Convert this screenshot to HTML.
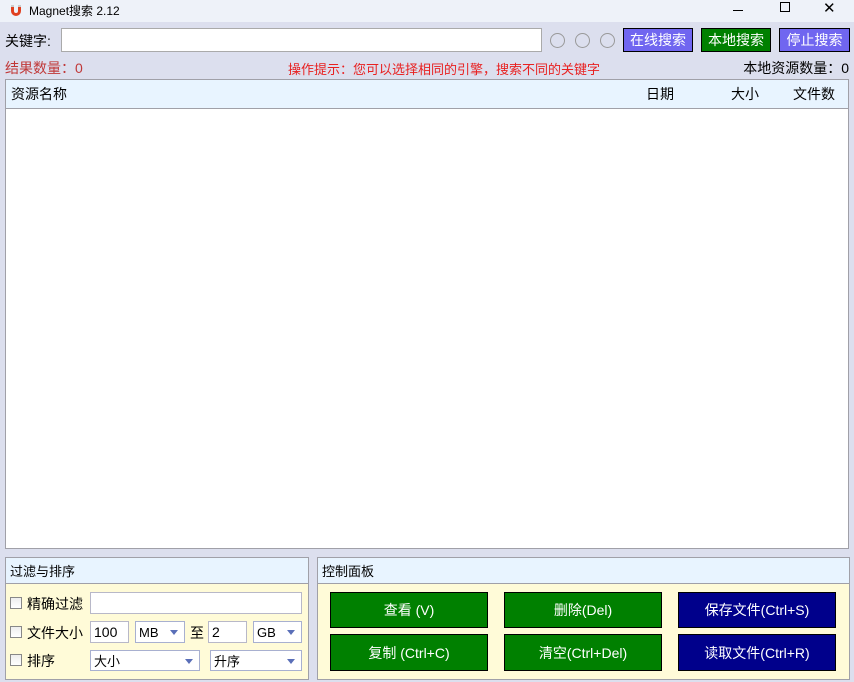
<!DOCTYPE html>
<html><head><meta charset="utf-8"><style>
*{box-sizing:border-box;margin:0;padding:0}
body{width:854px;height:682px;background:#dcdfee;font-family:"Liberation Sans","Noto Sans CJK SC",sans-serif;font-size:14px;position:relative;overflow:hidden;color:#000}
.a{position:absolute}
.btn{position:absolute;border:1px solid #000;color:#fff;display:flex;align-items:center;justify-content:center;font-size:14px}
.cb{position:absolute;width:12px;height:12px;border:1px solid #888;background:linear-gradient(#eee,#fff)}
.inp{position:absolute;background:#fff;border:1px solid #b8b8c8;font-size:14px;padding-left:3px;display:flex;align-items:center}
.sel{position:absolute;background:#fff;border:1px solid #a8b0d0;font-size:13px;padding-left:3px;display:flex;align-items:center}
.sel:after{content:"";position:absolute;right:6px;top:50%;margin-top:-2px;border-left:4px solid transparent;border-right:4px solid transparent;border-top:5px solid #5a6fb8}
.circ{position:absolute;width:15px;height:15px;border:1px solid #999;border-radius:50%}
</style></head><body>
<div class="a" style="left:0;top:0;width:854px;height:22px;background:#eef2f9"></div>
<svg class="a" style="left:8px;top:2px" width="16" height="16" viewBox="0 0 16 16"><path d="M3 4v5a5 5 0 0 0 10 0V4h-3v5a2 2 0 0 1-4 0V4z" fill="#e04020"/><rect x="3" y="3" width="3" height="2" fill="#ccc"/><rect x="10" y="3" width="3" height="2" fill="#ccc"/></svg>
<div class="a" style="left:29px;top:2px;font-size:12px">Magnet搜索 2.12</div>
<div class="a" style="left:733px;top:10px;width:10px;height:1px;background:#000"></div>
<div class="a" style="left:780px;top:2px;width:10px;height:10px;border:1px solid #000"></div>
<div class="a" style="left:823px;top:-1px;font-size:15px">✕</div>

<div class="a" style="left:5px;top:31px">关键字:</div>
<div class="inp" style="left:61px;top:28px;width:481px;height:24px;border-color:#aaa"></div>
<div class="circ" style="left:550px;top:33px"></div>
<div class="circ" style="left:575px;top:33px"></div>
<div class="circ" style="left:600px;top:33px"></div>
<div class="btn" style="left:623px;top:28px;width:70px;height:24px;background:#7066f0">在线搜索</div>
<div class="btn" style="left:701px;top:28px;width:70px;height:24px;background:#008000">本地搜索</div>
<div class="btn" style="left:779px;top:28px;width:71px;height:24px;background:#7066f0">停止搜索</div>

<div class="a" style="left:5px;top:58px;color:#c03838">结果数量：0</div>
<div class="a" style="left:288px;top:59px;color:#e82020;font-size:13px">操作提示：您可以选择相同的引擎，搜索不同的关键字</div>
<div class="a" style="right:5px;top:58px">本地资源数量：0</div>

<div class="a" style="left:5px;top:79px;width:844px;height:470px;background:#fff;border:1px solid #a0a0a8"></div>
<div class="a" style="left:6px;top:80px;width:842px;height:29px;background:#e8f4ff;border-bottom:1px solid #a0a0a8"></div>
<div class="a" style="left:11px;top:84px">资源名称</div>
<div class="a" style="left:646px;top:84px">日期</div>
<div class="a" style="left:731px;top:84px">大小</div>
<div class="a" style="left:793px;top:84px">文件数</div>

<div class="a" style="left:5px;top:557px;width:304px;height:123px;background:#fffbd8;border:1px solid #a0a0a8"></div>
<div class="a" style="left:6px;top:558px;width:302px;height:26px;background:#e8f4ff;border-bottom:1px solid #a0a0a8"></div>
<div class="a" style="left:10px;top:561px;font-size:13px">过滤与排序</div>
<div class="cb" style="left:10px;top:597px"></div><div class="a" style="left:27px;top:594px">精确过滤</div>
<div class="inp" style="left:90px;top:592px;width:212px;height:22px"></div>
<div class="cb" style="left:10px;top:626px"></div><div class="a" style="left:27px;top:623px">文件大小</div>
<div class="inp" style="left:90px;top:621px;width:39px;height:22px">100</div>
<div class="sel" style="left:135px;top:621px;width:50px;height:22px">MB</div>
<div class="a" style="left:190px;top:623px">至</div>
<div class="inp" style="left:208px;top:621px;width:39px;height:22px">2</div>
<div class="sel" style="left:253px;top:621px;width:49px;height:22px">GB</div>
<div class="cb" style="left:10px;top:654px"></div><div class="a" style="left:27px;top:651px">排序</div>
<div class="sel" style="left:90px;top:650px;width:110px;height:21px">大小</div>
<div class="sel" style="left:210px;top:650px;width:92px;height:21px">升序</div>

<div class="a" style="left:317px;top:557px;width:533px;height:123px;background:#fffbd8;border:1px solid #a0a0a8"></div>
<div class="a" style="left:318px;top:558px;width:531px;height:26px;background:#e8f4ff;border-bottom:1px solid #a0a0a8"></div>
<div class="a" style="left:322px;top:561px;font-size:13px">控制面板</div>
<div class="btn" style="left:330px;top:592px;width:158px;height:36px;background:#008000">查看 (V)</div>
<div class="btn" style="left:504px;top:592px;width:158px;height:36px;background:#008000">删除(Del)</div>
<div class="btn" style="left:678px;top:592px;width:158px;height:36px;background:#00008b">保存文件(Ctrl+S)</div>
<div class="btn" style="left:330px;top:634px;width:158px;height:37px;background:#008000">复制 (Ctrl+C)</div>
<div class="btn" style="left:504px;top:634px;width:158px;height:37px;background:#008000">清空(Ctrl+Del)</div>
<div class="btn" style="left:678px;top:634px;width:158px;height:37px;background:#00008b">读取文件(Ctrl+R)</div>
</body></html>
